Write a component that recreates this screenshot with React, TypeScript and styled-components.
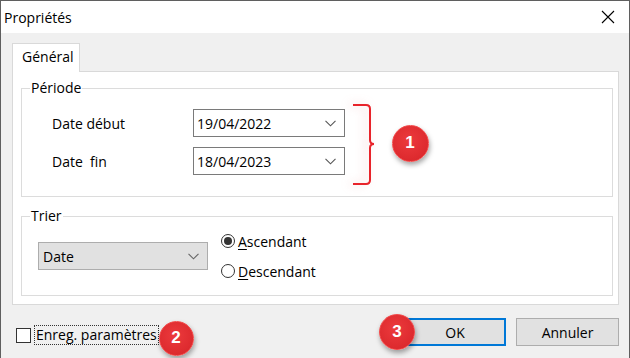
import React from 'react';
import styled, { createGlobalStyle } from 'styled-components';

const Global = createGlobalStyle`
  html, body { margin: 0; padding: 0; background: #fff; }
  body { font-family: "Open Sans", "Noto Sans", sans-serif; font-size: 14px; color: #000; }
  * { box-sizing: border-box; }
`;

const Window = styled.div`
  position: relative;
  width: 630px;
  height: 358px;
  border: 1px solid #5f5f5f;
  border-bottom: none;
  background: #f0f0f0;
  display: flex;
  flex-direction: column;
  overflow: hidden;
`;

const TitleBar = styled.div`
  height: 32px;
  flex: none;
  background: #fff;
  display: flex;
  align-items: center;
  justify-content: space-between;
  padding: 0 14px 0 3px;
  font-size: 14px;
`;

const CloseBtn = styled.span`
  display: flex;
  width: 14px;
  height: 14px;
`;

const Body = styled.div`
  flex: 1;
  display: flex;
  flex-direction: column;
  padding: 10px 10px 0 11px;
`;

const TabStrip = styled.div`
  display: flex;
  position: relative;
  z-index: 1;
  margin-bottom: -1px;
`;

const Tab = styled.div`
  height: 29px;
  width: 68px;
  background: #fff;
  border: 1px solid #d9d9d9;
  border-bottom: none;
  padding: 3px 0 0 9px;
  line-height: 20px;
`;

const Panel = styled.div`
  height: 234px;
  background: #fff;
  border: 1px solid #d9d9d9;
  padding: 7px 5px 6px 8px;
  display: flex;
  flex-direction: column;
  gap: 10px;
`;

const Group = styled.fieldset`
  margin: 0;
  min-inline-size: 0;
  border: 1px solid #dcdcdc;
  padding: 0;
`;

const Legend = styled.legend`
  padding: 0 1px;
  margin-left: 8px;
  line-height: 18px;
`;

const Rows = styled.div`
  display: flex;
  flex-direction: column;
  gap: 10px;
  padding: 12px 0 21px 30px;
`;

const Row = styled.div`
  display: flex;
  align-items: center;
`;

const Label = styled.span`
  width: 141px;
  white-space: pre;
`;

const DateBox = styled.div`
  width: 152px;
  height: 28px;
  border: 1px solid #7a7a7a;
  background: #fff;
  display: flex;
  align-items: center;
  justify-content: space-between;
  padding: 0 8px 0 3px;
`;

const Combo = styled.div`
  width: 170px;
  height: 28px;
  border: 1px solid #adadad;
  background: #e1e1e1;
  display: flex;
  align-items: center;
  justify-content: space-between;
  padding: 0 8px 0 4px;
`;

const SortRow = styled.div`
  display: flex;
  align-items: center;
  gap: 13px;
  padding: 5px 0 13px 16px;
`;

const RadioCol = styled.div`
  display: flex;
  flex-direction: column;
  gap: 8px;
`;

const RadioItem = styled.div`
  display: flex;
  align-items: center;
  height: 22px;
  gap: 3px;
`;

const RadioCircle = styled.span<{ $on?: boolean }>`
  flex: none;
  width: 14px;
  height: 14px;
  border-radius: 50%;
  border: 1px solid #333;
  background: #fff;
  display: flex;
  align-items: center;
  justify-content: center;
  &::after {
    content: '';
    display: ${p => (p.$on ? 'block' : 'none')};
    width: 8px;
    height: 8px;
    border-radius: 50%;
    background: #333;
  }
`;

const Key = styled.span`
  text-decoration: underline;
  text-underline-offset: 2px;
`;

const Footer = styled.div`
  display: flex;
  align-items: flex-start;
  justify-content: space-between;
  padding-top: 13px;
`;

const CheckWrap = styled.div`
  display: flex;
  align-items: center;
  margin: 7px 0 0 4px;
  gap: 3px;
`;

const CheckBox = styled.span`
  flex: none;
  width: 15px;
  height: 15px;
  border: 1px solid #333;
  background: #fff;
`;

const Focus = styled.span`
  border: 1px dotted #333;
  height: 20px;
  line-height: 17px;
  padding: 0 1px 0 1px;
  white-space: nowrap;
`;

const Buttons = styled.div`
  display: flex;
  gap: 10px;
`;

const Button = styled.div<{ $primary?: boolean }>`
  width: ${p => (p.$primary ? '102px' : '103px')};
  height: 28px;
  background: #e1e1e1;
  border: 1px solid ${p => (p.$primary ? '#0078d7' : '#adadad')};
  box-shadow: ${p => (p.$primary ? 'inset 0 0 0 1px #0078d7' : 'none')};
  display: flex;
  align-items: center;
  justify-content: center;
`;

const Badge = styled.div<{ $x: number; $y: number; $d: number }>`
  position: absolute;
  left: ${p => p.$x - p.$d / 2 - 1}px;
  top: ${p => p.$y - p.$d / 2 - 1}px;
  width: ${p => p.$d}px;
  height: ${p => p.$d}px;
  border-radius: 50%;
  background: radial-gradient(circle at 45% 40%, #ec3a3d 0%, #dd2a2e 70%, #cf2025 100%);
  border: 1.5px solid #f24a4a;
  box-shadow: 1px 3px 5px rgba(0, 0, 0, 0.35);
  color: #fff;
  font-family: "Liberation Sans", Arial, sans-serif;
  font-weight: bold;
  font-size: 17px;
  display: flex;
  align-items: center;
  justify-content: center;
  z-index: 5;
`;

const Bracket = styled.svg`
  position: absolute;
  left: 339px;
  top: 101px;
  overflow: visible;
  filter: drop-shadow(-4px 0 5px rgba(230, 120, 120, 0.35));
`;

const Chevron = ({ color = '#555' }: { color?: string }) => (
  <svg width="11" height="7" viewBox="0 0 11 7">
    <path d="M0.5 0.8 L5.5 5.8 L10.5 0.8" fill="none" stroke={color} strokeWidth="1.1" />
  </svg>
);

export default function App() {
  return (
    <>
      <Global />
      <Window>
        <TitleBar>
          <span>Propriétés</span>
          <CloseBtn>
            <svg width="14" height="14" viewBox="0 0 14 14">
              <path d="M1 1 L13 13 M13 1 L1 13" stroke="#000" strokeWidth="1.1" />
            </svg>
          </CloseBtn>
        </TitleBar>
        <Body>
          <TabStrip>
            <Tab>Général</Tab>
          </TabStrip>
          <Panel>
            <Group>
              <Legend>Période</Legend>
              <Rows>
                <Row>
                  <Label>Date début</Label>
                  <DateBox>
                    <span>19/04/2022</span>
                    <Chevron />
                  </DateBox>
                </Row>
                <Row>
                  <Label>{'Date  fin'}</Label>
                  <DateBox>
                    <span>18/04/2023</span>
                    <Chevron />
                  </DateBox>
                </Row>
              </Rows>
            </Group>
            <Group>
              <Legend>Trier</Legend>
              <SortRow>
                <Combo>
                  <span>Date</span>
                  <Chevron color="#666" />
                </Combo>
                <RadioCol>
                  <RadioItem>
                    <RadioCircle $on />
                    <span><Key>A</Key>scendant</span>
                  </RadioItem>
                  <RadioItem>
                    <RadioCircle />
                    <span><Key>D</Key>escendant</span>
                  </RadioItem>
                </RadioCol>
              </SortRow>
            </Group>
          </Panel>
          <Footer>
            <CheckWrap>
              <CheckBox />
              <Focus>Enreg. paramètres</Focus>
            </CheckWrap>
            <Buttons>
              <Button $primary>OK</Button>
              <Button>Annuler</Button>
            </Buttons>
          </Footer>
        </Body>
        <Bracket width="40" height="90" viewBox="0 0 40 90">
          <path
            d="M13 3 H26 Q30 3 30 7 V38 Q30 42 34 42 Q30 42 30 46 V78 Q30 82 26 82 H13"
            fill="none"
            stroke="#e8232a"
            strokeWidth="2"
          />
        </Bracket>
        <Badge $x={410} $y={143} $d={37}>1</Badge>
        <Badge $x={176} $y={338} $d={35}>2</Badge>
        <Badge $x={397} $y={332} $d={36}>3</Badge>
      </Window>
    </>
  );
}
